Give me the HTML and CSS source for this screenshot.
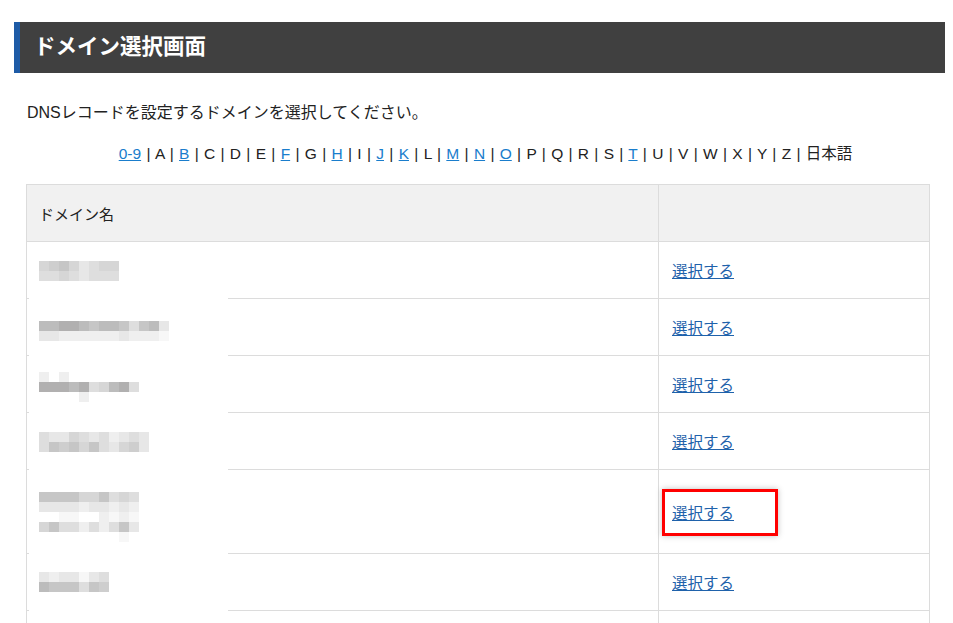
FILE: index.html
```html
<!DOCTYPE html>
<html lang="ja">
<head>
  <meta charset="UTF-8" />
  <meta name="viewport" content="width=device-width, initial-scale=1.0"/>
  <title>ドメイン選択画面</title>
  <link rel="stylesheet" href="styles.css">
</head>
<body>
  <h1 class="page-title">ドメイン選択画面</h1>

  <div class="content">
    <p class="lead">DNSレコードを設定するドメインを選択してください。</p>

    <p class="initials">
      <a href="#">0-9</a> | A | <a href="#">B</a> | C | D | E | <a href="#">F</a> | G | <a href="#">H</a> | I | <a href="#">J</a> | <a href="#">K</a> | L | <a href="#">M</a> | <a href="#">N</a> | <a href="#">O</a> | P | Q | R | S | <a href="#">T</a> | U | V | W | X | Y | Z | 日本語
    </p>

    <table class="domains">
      <thead>
        <tr>
          <th class="col-name">ドメイン名</th>
          <th class="col-action"></th>
        </tr>
      </thead>
      <tbody>
        <!-- domain names are blurred out -->
        <tr>
          <td class="name">
            <div class="mosaic off-19">
              <div><i class="s6"></i><i class="s5"></i><i class="s4"></i><i class="s6"></i><i class="s8"></i><i class="s7"></i><i class="s6"></i><i class="s6"></i></div>
              <div><i class="s7"></i><i class="s7"></i><i class="s6"></i><i class="s7"></i><i class="s8"></i><i class="s7"></i><i class="s7"></i><i class="s7"></i></div>
            </div>
          </td>
          <td class="action"><a href="#">選択する</a></td>
        </tr>
        <tr>
          <td class="name">
            <div class="mosaic off-22">
              <div><i class="s3"></i><i class="s3"></i><i class="s2"></i><i class="s2"></i><i class="s3"></i><i class="s4"></i><i class="s3"></i><i class="s3"></i><i class="s4"></i><i class="s7"></i><i class="s4"></i><i class="s3"></i><i class="s8"></i></div>
              <div><i class="s8"></i><i class="s8"></i><i class="s9"></i><i class="s9"></i><i class="s9"></i><i class="s9"></i><i class="s9"></i><i class="s9"></i><i class="s8"></i><i class="s9"></i><i class="s9"></i><i class="s9"></i><i class="s10"></i></div>
            </div>
          </td>
          <td class="action"><a href="#">選択する</a></td>
        </tr>
        <tr>
          <td class="name">
            <div class="mosaic off-16">
              <div><i class="s9"></i><i></i><i class="s9"></i></div>
              <div><i class="s2"></i><i class="s2"></i><i class="s2"></i><i class="s3"></i><i class="s2"></i><i class="s7"></i><i class="s6"></i><i class="s3"></i><i class="s2"></i><i class="s7"></i></div>
              <div><i></i><i></i><i></i><i></i><i class="s9"></i></div>
            </div>
          </td>
          <td class="action"><a href="#">選択する</a></td>
        </tr>
        <tr>
          <td class="name">
            <div class="mosaic off-19">
              <div><i class="s7"></i><i class="s8"></i><i class="s8"></i><i class="s6"></i><i class="s7"></i><i class="s8"></i><i class="s7"></i><i class="s9"></i><i class="s8"></i><i class="s7"></i><i class="s8"></i></div>
              <div><i class="s7"></i><i class="s4"></i><i class="s5"></i><i class="s4"></i><i class="s6"></i><i class="s4"></i><i class="s7"></i><i class="s8"></i><i class="s6"></i><i class="s5"></i><i class="s8"></i></div>
            </div>
          </td>
          <td class="action"><a href="#">選択する</a></td>
        </tr>
        <tr class="tall">
          <td class="name">
            <div class="mosaic off-22">
              <div><i class="s4"></i><i class="s4"></i><i class="s4"></i><i class="s4"></i><i class="s6"></i><i class="s6"></i><i class="s4"></i><i class="s7"></i><i class="s6"></i><i class="s7"></i></div>
              <div><i class="s8"></i><i class="s8"></i><i class="s8"></i><i class="s8"></i><i class="s9"></i><i class="s8"></i><i class="s8"></i><i class="s9"></i><i class="s8"></i><i class="s9"></i></div>
              <div><i></i><i></i><i class="s10"></i><i class="s10"></i><i></i><i></i><i class="s9"></i><i class="s10"></i><i class="s9"></i><i class="s10"></i></div>
              <div><i class="s6"></i><i class="s4"></i><i class="s7"></i><i class="s7"></i><i class="s9"></i><i class="s7"></i><i class="s9"></i><i class="s7"></i><i class="s4"></i><i class="s8"></i></div>
              <div><i></i><i></i><i></i><i></i><i></i><i></i><i></i><i></i><i class="s10"></i></div>
            </div>
          </td>
          <td class="action">
            <a href="#">選択する</a>
            <span class="highlight"></span>
          </td>
        </tr>
        <tr>
          <td class="name">
            <div class="mosaic off-18">
              <div><i class="s8"></i><i class="s9"></i><i class="s8"></i><i class="s8"></i><i class="s10"></i><i class="s8"></i><i class="s7"></i></div>
              <div><i class="s3"></i><i class="s4"></i><i class="s4"></i><i class="s4"></i><i class="s7"></i><i class="s4"></i><i class="s5"></i></div>
            </div>
          </td>
          <td class="action"><a href="#">選択する</a></td>
        </tr>
        <tr>
          <td class="name"></td>
          <td class="action"></td>
        </tr>
      </tbody>
    </table>
  </div>
</body>
</html>
```

FILE: styles.css
```css
body {
  font-family: "Liberation Sans", "Noto Sans CJK JP", sans-serif;
  color: #222;
  background: #fff;
  margin: 0;
  padding: 0;
}
.page-title {
  margin: 22px 8px 0 14px;
  height: 51px;
  padding: 0 0 0 14px;
  background: #404040;
  border-left: 6px solid #1e5ba6;
  color: #fff;
  font-size: 21.5px;
  font-weight: bold;
  line-height: 51px;
}
.content {
  margin: 0 23px 0 26px;
}
.lead {
  margin: 28px 0 0 1px;
  font-size: 16px;
  line-height: 24px;
}
.initials {
  margin: 17px 0 0;
  padding-left: 15px;
  text-align: center;
  font-size: 15.5px;
  line-height: 24px;
  word-spacing: 1px;
}
.initials a {
  color: #1a7dcc;
}
.domains {
  width: 904px;
  margin-top: 18px;
  border-collapse: separate;
  border-spacing: 0;
  border-top: 1px solid #dcdcdc;
  border-left: 1px solid #dcdcdc;
  font-size: 15px;
}
.domains th,
.domains td {
  border-right: 1px solid #dcdcdc;
  border-bottom: 1px solid #dcdcdc;
  padding: 0 12px;
  text-align: left;
}
.domains th {
  height: 56px;
  background: #f1f1f1;
  font-weight: normal;
  color: #222;
}
.col-name {
  width: 607px;
}
.domains td {
  height: 56px;
}
.domains tr.tall td {
  height: 83px;
}
.domains td.name {
  position: relative;
  vertical-align: top;
}
/* white patch left over the row line by the blur */
.domains td.name::after {
  content: "";
  position: absolute;
  left: 2px;
  bottom: -1px;
  width: 199px;
  height: 1px;
  background: #fff;
}
.domains td.action {
  position: relative;
  padding-left: 13px;
}
.action a {
  color: #1f62ab;
  font-size: 15.5px;
}
.mosaic div {
  display: flex;
  height: 10px;
}
.mosaic i {
  width: 10px;
  height: 10px;
}
.off-16 { margin-top: 16px; }
.off-18 { margin-top: 18px; }
.off-19 { margin-top: 19px; }
.off-22 { margin-top: 22px; }
.s2 { background: #b1b0b0; }
.s3 { background: #bcbcbc; }
.s4 { background: #c6c6c6; }
.s5 { background: #cecece; }
.s6 { background: #d6d6d6; }
.s7 { background: #dedede; }
.s8 { background: #e7e7e7; }
.s9 { background: #efefef; }
.s10 { background: #f7f7f7; }
.highlight {
  position: absolute;
  left: 3px;
  top: 19px;
  width: 110px;
  height: 41px;
  border: 3px solid #f00;
  box-shadow: 0 0 6px rgba(0, 0, 0, 0.25);
}
.domains tr:last-child td {
  height: 12px;
}
```
